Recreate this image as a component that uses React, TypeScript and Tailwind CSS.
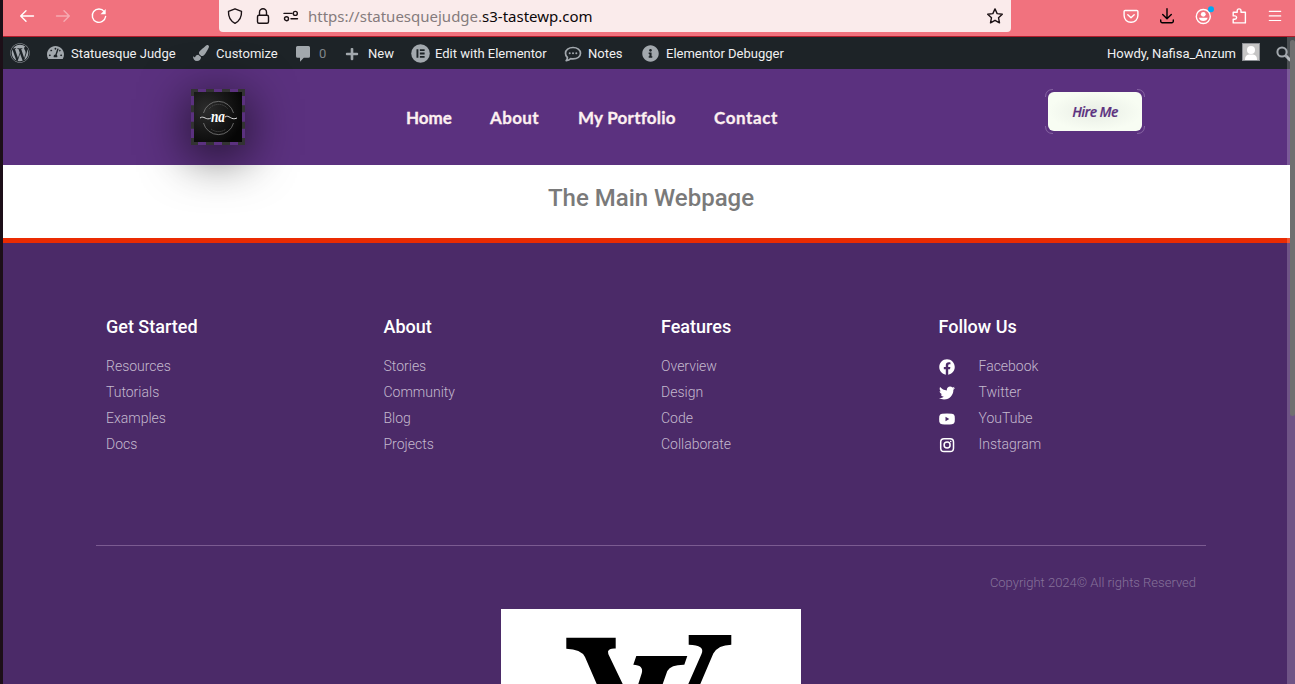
import React from "react";
import {
  FaFacebook,
  FaInfoCircle,
  FaPaintBrush,
  FaPlus,
  FaTachometerAlt,
  FaTwitter,
  FaWordpress,
} from "react-icons/fa";

const stroke = {
  fill: "none",
  stroke: "currentColor",
  strokeWidth: 1.4,
  strokeLinecap: "round" as const,
  strokeLinejoin: "round" as const,
};

function Icon({ children, className = "" }: { children: React.ReactNode; className?: string }) {
  return (
    <svg viewBox="0 0 16 16" className={`size-4 shrink-0 overflow-visible ${className}`} {...stroke}>
      {children}
    </svg>
  );
}

function BrowserBar() {
  return (
    <div className="flex h-9 shrink-0 bg-[#f1727e] text-white">
      <div className="flex h-8 w-[216px] items-center gap-5 pl-4">
        <Icon>
          <path d="M14.5 8H1.7M7 2.7 1.7 8 7 13.3" />
        </Icon>
        <Icon className="opacity-40">
          <path d="M1.5 8h12.8M9 2.7 14.3 8 9 13.3" />
        </Icon>
        <Icon>
          <path d="M13.3 3.6A6.7 6.7 0 1 0 14.6 8.5" />
          <path d="M14.7 1v5.2H9.5z" fill="currentColor" stroke="none" />
        </Icon>
      </div>
      <div className="flex h-8 w-[792px] items-center rounded-b bg-[#faebeb] pl-2 text-[#1b1215]">
        <Icon>
          <path d="M8 .8 14.5 3.4C14.8 9 12.5 13 8 15.3 3.5 13 1.2 9 1.5 3.4z" />
        </Icon>
        <Icon className="ml-3">
          <rect x="2.5" y="7.3" width="11" height="8" rx="1.5" />
          <path d="M4.5 7V4.2a3.5 3.5 0 0 1 7 0V7" />
        </Icon>
        <Icon className="ml-3">
          <path d="M1 5.4h8M8 10.7h6.5" />
          <circle cx="12.3" cy="5.4" r="2" />
          <circle cx="3.5" cy="10.7" r="2" />
        </Icon>
        <div className="ml-[9px] whitespace-nowrap font-['Noto_Sans',sans-serif] text-[15px] text-[#857b7d]">
          https://statuesquejudge.<span className="text-[#0c0709]">s3-tastewp.com</span>
        </div>
        <Icon className="ml-auto mr-2">
          <path d="m8 .9 2.15 4.7 5.15.6-3.8 3.5 1 5.1L8 12.3l-4.5 2.5 1-5.1L.7 6.2l5.15-.6z" />
        </Icon>
      </div>
      <div className="flex h-8 flex-1 items-center gap-5 pl-28">
        <Icon>
          <path d="M2.2 2.5h11.6a1.1 1.1 0 0 1 1.1 1.1v4A6.7 6.7 0 0 1 8 14.3a6.7 6.7 0 0 1-6.9-6.7v-4a1.1 1.1 0 0 1 1.1-1.1zM4.8 6.8 8 9.800l3.2-3" />
        </Icon>
        <Icon className="text-black">
          <path d="M8 .8v9.700M3.7 6.5 8 10.7l4.3-4.2M1.7 12v1.2a1.5 1.5 0 0 0 1.5 1.5h9.6a1.5 1.5 0 0 0 1.5-1.5V12" />
        </Icon>
        <Icon>
          <circle cx="8.3" cy="8.5" r="7" />
          <circle cx="8.3" cy="6.3" r="2.4" fill="currentColor" stroke="none" />
          <path d="M3.9 9.7h8.8a4.6 4.6 0 0 1-8.8 0z" fill="currentColor" stroke="none" />
          <circle cx="16" cy="1.2" r="3" fill="#00a8f3" stroke="none" />
        </Icon>
        <Icon>
          <path d="M6.2 4.3V2.8a1.900 1.900 0 0 1 3.8 0v1.5h4.4v10.600H2.200v-3.600h1.700a1.700 1.700 0 0 0 0-3.400H2.200V4.300z" />
        </Icon>
        <Icon>
          <path d="M2.300 3.300h11.400M2.300 7.900h11.400M2.300 12.500h11.400" strokeWidth="1.200" />
        </Icon>
      </div>
    </div>
  );
}

function NotesIcon() {
  return (
    <svg viewBox="0 0 18 18" className="-ml-px size-[18px]" {...stroke} strokeWidth="1.7">
      <path d="M9 2.5c4.300 0 7.500 2.400 7.500 5.700S13.300 13.800 9 13.800c-.8 0-1.500 0-2.300-.2-1.200 1.200-2.700 1.800-4.500 2 .9-.9 1.300-1.900 1.200-3.100C2.200 11.400 1.500 10 1.500 8.200 1.500 4.900 4.700 2.500 9 2.500z" />
      <path d="M5.700 8.200h.01M9 8.200h.01M12.300 8.200h.01" strokeWidth="2" />
    </svg>
  );
}

function ElementorIcon() {
  return (
    <svg viewBox="0 0 18 18" className="-ml-px mr-[5px] size-[19px]">
      <circle cx="9" cy="9" r="8.800" fill="#a2a8ad" />
      <path d="M5.200 5h1.800v8H5.200zM8.400 5h4.500v1.700H8.400zM8.400 8.150h4.500v1.700H8.400zM8.400 11.300h4.500V13H8.400z" fill="#1d2327" />
    </svg>
  );
}

function AdminBar() {
  return (
    <div className="flex h-8 shrink-0 items-center whitespace-nowrap bg-[#1d2327] pt-px text-[13px] text-[#f0f0f1]">
      <div className="flex w-11 items-center pl-[7px] text-[#a2a8ad]">
        <FaWordpress size={20} className="-mt-px" />
      </div>
      <div className="flex w-[146px] items-center">
        <FaTachometerAlt size={17} className="-mt-0.5 mr-[7px] text-[#a2a8ad]" />
        <span>Statuesque Judge</span>
      </div>
      <div className="flex w-[103px] items-center">
        <FaPaintBrush size={16} className="-mt-px mr-[7px] text-[#a2a8ad]" />
        <span>Customize</span>
      </div>
      <div className="flex w-[49px] items-center">
        <svg viewBox="0 0 14 16" className="mr-[9px] h-4 w-3.5" fill="#a2a8ad">
          <path d="M1.500 0h11Q14 0 14 1.500v8.800q0 1.500-1.500 1.500H7.800L4 15.800v-4H1.500Q0 11.800 0 10.300V1.500Q0 0 1.500 0z" />
        </svg>
        <span className="text-[#80868b]">0</span>
      </div>
      <div className="flex w-[67px] items-center">
        <FaPlus size={14} className="mr-[9px] text-[#a2a8ad]" />
        <span>New</span>
      </div>
      <div className="flex w-[153px] items-center">
        <ElementorIcon />
        <span>Edit with Elementor</span>
      </div>
      <div className="flex w-[77px] items-center text-[#a2a8ad]">
        <NotesIcon />
        <span className="ml-1.5 text-[#f0f0f1]">Notes</span>
      </div>
      <div className="flex items-center">
        <FaInfoCircle size={17} className="-mt-px mr-[7px] text-[#a2a8ad]" />
        <span>Elementor Debugger</span>
      </div>
      <span className="ml-auto">Howdy, Nafisa_Anzum</span>
      <svg viewBox="0 0 18 18" className="mb-1 ml-1.5 size-[18px]">
        <rect x=".5" y=".5" width="17" height="17" fill="#c5c5c5" stroke="#8c8f94" />
        <circle cx="9" cy="7" r="4" fill="white" />
        <path d="M3 17c0-4 1.500-5 4-5.500h4c2.500.5 4 1.500 4 5.500z" fill="white" />
      </svg>
      <svg viewBox="0 0 16 16" className="ml-4 mr-[3px] size-4" fill="none" stroke="#a2a8ad">
        <circle cx="6" cy="6" r="4.600" strokeWidth="2" />
        <path d="m9.500 9.500 5 5" strokeWidth="3" />
      </svg>
    </div>
  );
}

function Logo() {
  return (
    <div className="ml-[188px] h-14 w-[54px] shadow-[0_10px_50px_0_rgba(0,0,0,0.75)]">
      <svg viewBox="0 0 54 56" className="block h-14 w-[54px]">
        <defs>
          <radialGradient id="smoke" cx=".25" cy=".35" r=".8">
            <stop offset="0" stopColor="#2c2c2c" />
            <stop offset=".55" stopColor="#171717" />
            <stop offset="1" stopColor="#060606" />
          </radialGradient>
        </defs>
        <rect width="54" height="56" fill="#5b317f" />
        <g stroke="#333" strokeWidth="3" fill="none">
          <path d="M0 1.500h54M0 54.500h54" strokeDasharray="7 8" />
          <path d="M15 1.500h8M31 1.500h8M15 54.500h8M31 54.500h8" />
          <path d="M1.500 0v56M52.500 0v56" strokeDasharray="7 9.330" />
        </g>
        <path d="M7 0h8v3H7zM23 0h8v3h-8zM39 0h8v3h-8zM7 53h8v3H7zM23 53h8v3h-8zM39 53h8v3h-8z" fill="#5b317f" />
        <g transform="translate(3 3)">
          <rect width="48" height="50" fill="url(#smoke)" />
          <g fill="none" stroke="#8d8d8d" strokeWidth=".7">
            <path d="M9.500 21a15.500 15.500 0 0 1 30 0M9.500 31a15.500 15.500 0 0 0 30 0" />
            <path d="M15 17a12 12 0 0 1 19 0M17 37a12 12 0 0 0 15 0" strokeDasharray="1 1" strokeWidth="1" stroke="#555" />
          </g>
          <path d="M6 26c4-3 6 3 11 0M31 25c4-3 6 4 12 1" fill="none" stroke="#ddd" strokeWidth="1" />
          <text x="17" y="30" fill="white" fontFamily="Liberation Serif, serif" fontSize="16" fontStyle="italic" fontWeight="700" textLength="14" lengthAdjust="spacingAndGlyphs">
            na
          </text>
        </g>
      </svg>
    </div>
  );
}

function Header() {
  return (
    <header className="relative flex h-24 shrink-0 items-start bg-[#5b317f] pt-5">
      <Logo />
      <nav className="ml-[161px] mt-[15px] flex whitespace-nowrap font-['Lato',sans-serif] text-[17px] font-bold leading-7 text-[#fdf0f0] [-webkit-text-stroke:0.3px]">
        <a className="w-[84px]">Home</a>
        <a className="w-[88px] tracking-[0.35px]">About</a>
        <a className="w-[136px] tracking-[0.23px]">My Portfolio</a>
        <a className="tracking-[0.6px]">Contact</a>
      </nav>
      <div className="relative ml-auto mr-[153px] mt-[3px] flex h-[39px] w-[94px] items-center justify-center rounded-md bg-[#f8fdf3] bg-[radial-gradient(ellipse_at_center,#e9eee6_0%,#eff4eb_30%,#f8fdf3_70%)] pt-px font-['Open_Sans',sans-serif] text-sm font-semibold italic tracking-[-0.6px] text-[#5b317f] [-webkit-text-stroke:0.2px]">
        Hire Me
        <svg viewBox="0 0 100 45" className="absolute -left-[3px] -top-[3px] h-[45px] w-[100px]" fill="none" stroke="#9271ac" strokeWidth=".8">
          <path d="M.5 8Q.5.5 8 .5M92 .5q7.500 0 7.500 7.500M.5 37q0 7.500 7.500 7.500M92 44.500q7.500 0 7.500-7.500" />
        </svg>
      </div>
    </header>
  );
}

const columns = [
  { title: "Get Started", links: ["Resources", "Tutorials", "Examples", "Docs"] },
  { title: "About", links: ["Stories", "Community", "Blog", "Projects"] },
  { title: "Features", links: ["Overview", "Design", "Code", "Collaborate"] },
];

const YouTube = () => (
  <svg viewBox="0 0 16 16" className="size-4">
    <path fillRule="evenodd" fill="white" d="M3 2.700Q8 2.200 13 2.700q2.500.3 2.700 2.500.3 3 0 5.600-.3 2.200-2.700 2.500-5 .5-10 0Q.6 13 .3 10.800q-.3-2.800 0-5.600Q.6 3 3 2.700zM6.500 5.700v4.600L10.300 8z" />
  </svg>
);

const Instagram = () => (
  <svg viewBox="0 0 16 16" className="size-4" fill="none" stroke="white" strokeWidth="1.500">
    <rect x="1.700" y="1.700" width="12.800" height="12.800" rx="3.300" />
    <circle cx="8.100" cy="8.100" r="3" />
    <circle cx="11.700" cy="4.500" r=".8" fill="white" stroke="none" />
  </svg>
);

const socials = [
  { name: "Facebook", icon: <FaFacebook size={16} /> },
  { name: "Twitter", icon: <FaTwitter size={16} /> },
  { name: "YouTube", icon: <YouTube /> },
  { name: "Instagram", icon: <Instagram /> },
];

function Footer() {
  return (
    <footer className="flex flex-1 flex-col border-t-[5px] border-[#ea2b02] bg-[#4b2a68] pl-[93px] pr-[89px] text-white">
      <div className="-mr-2.5 grid h-[302px] shrink-0 grid-cols-4 pl-2.5 pt-[74px]">
        {columns.map((c) => (
          <section key={c.title}>
            <h3 className="text-lg font-medium leading-5">{c.title}</h3>
            <ul className="mt-4 text-sm font-light leading-[26px] text-[#c4b9ce]">
              {c.links.map((l) => (
                <li key={l}>{l}</li>
              ))}
            </ul>
          </section>
        ))}
        <section>
          <h3 className="text-lg font-medium leading-5">Follow Us</h3>
          <ul className="mt-4 text-sm font-light leading-[26px] text-[#c4b9ce]">
            {socials.map((s) => (
              <li key={s.name} className="flex">
                <span className="mt-1.5 flex w-10 text-white">{s.icon}</span>
                {s.name}
              </li>
            ))}
          </ul>
        </section>
      </div>
      <div className="flex h-16 shrink-0 items-start justify-end border-t border-[#7b5b91] pr-2.5 pt-7 text-[13px] font-light leading-[18px] text-[#86729a]">
        Copyright 2024© All rights Reserved
      </div>
      <svg viewBox="0 0 300 75" className="h-[75px] w-[300px] shrink-0 self-center bg-white">
        <path d="M65.300 28.700h49.400v10.800Q108 39 107 42.500q0 2 1 4L121.700 75h-26L84 48Q80 40 65.300 39.700z" />
        <path d="M135.300 47h51l-3 8.700Q170 55.500 166.300 62L161.700 75h-24.400l3.500-11q2-8-8.500-8.300z" />
        <path d="M187.700 26h42.600v9.700Q217 36 212.300 44.500L199.300 75h-12L200.500 45q4-9-12.800-9.300z" />
      </svg>
    </footer>
  );
}

export default function App() {
  return (
    <div className="relative flex h-[684px] w-[1295px] flex-col overflow-hidden bg-white pl-[3px] font-['Roboto',sans-serif]">
      <BrowserBar />
      <div className="h-px shrink-0 bg-[#b11c2b]" />
      <AdminBar />
      <Header />
      <main className="flex h-[73px] shrink-0 justify-center pl-1 pt-[17px] text-2xl font-medium text-[#7a7a7a]">
        <h1>The Main Webpage</h1>
      </main>
      <Footer />
      <div className="absolute bottom-0 left-0 top-0 w-[3px] bg-[#1c0f18]" />
      <div className="absolute bottom-0 right-0 top-[37px] w-2 bg-white/20">
        <div className="ml-[3px] mt-[3px] h-[376px] rounded-sm bg-[#707070]" />
      </div>
    </div>
  );
}
